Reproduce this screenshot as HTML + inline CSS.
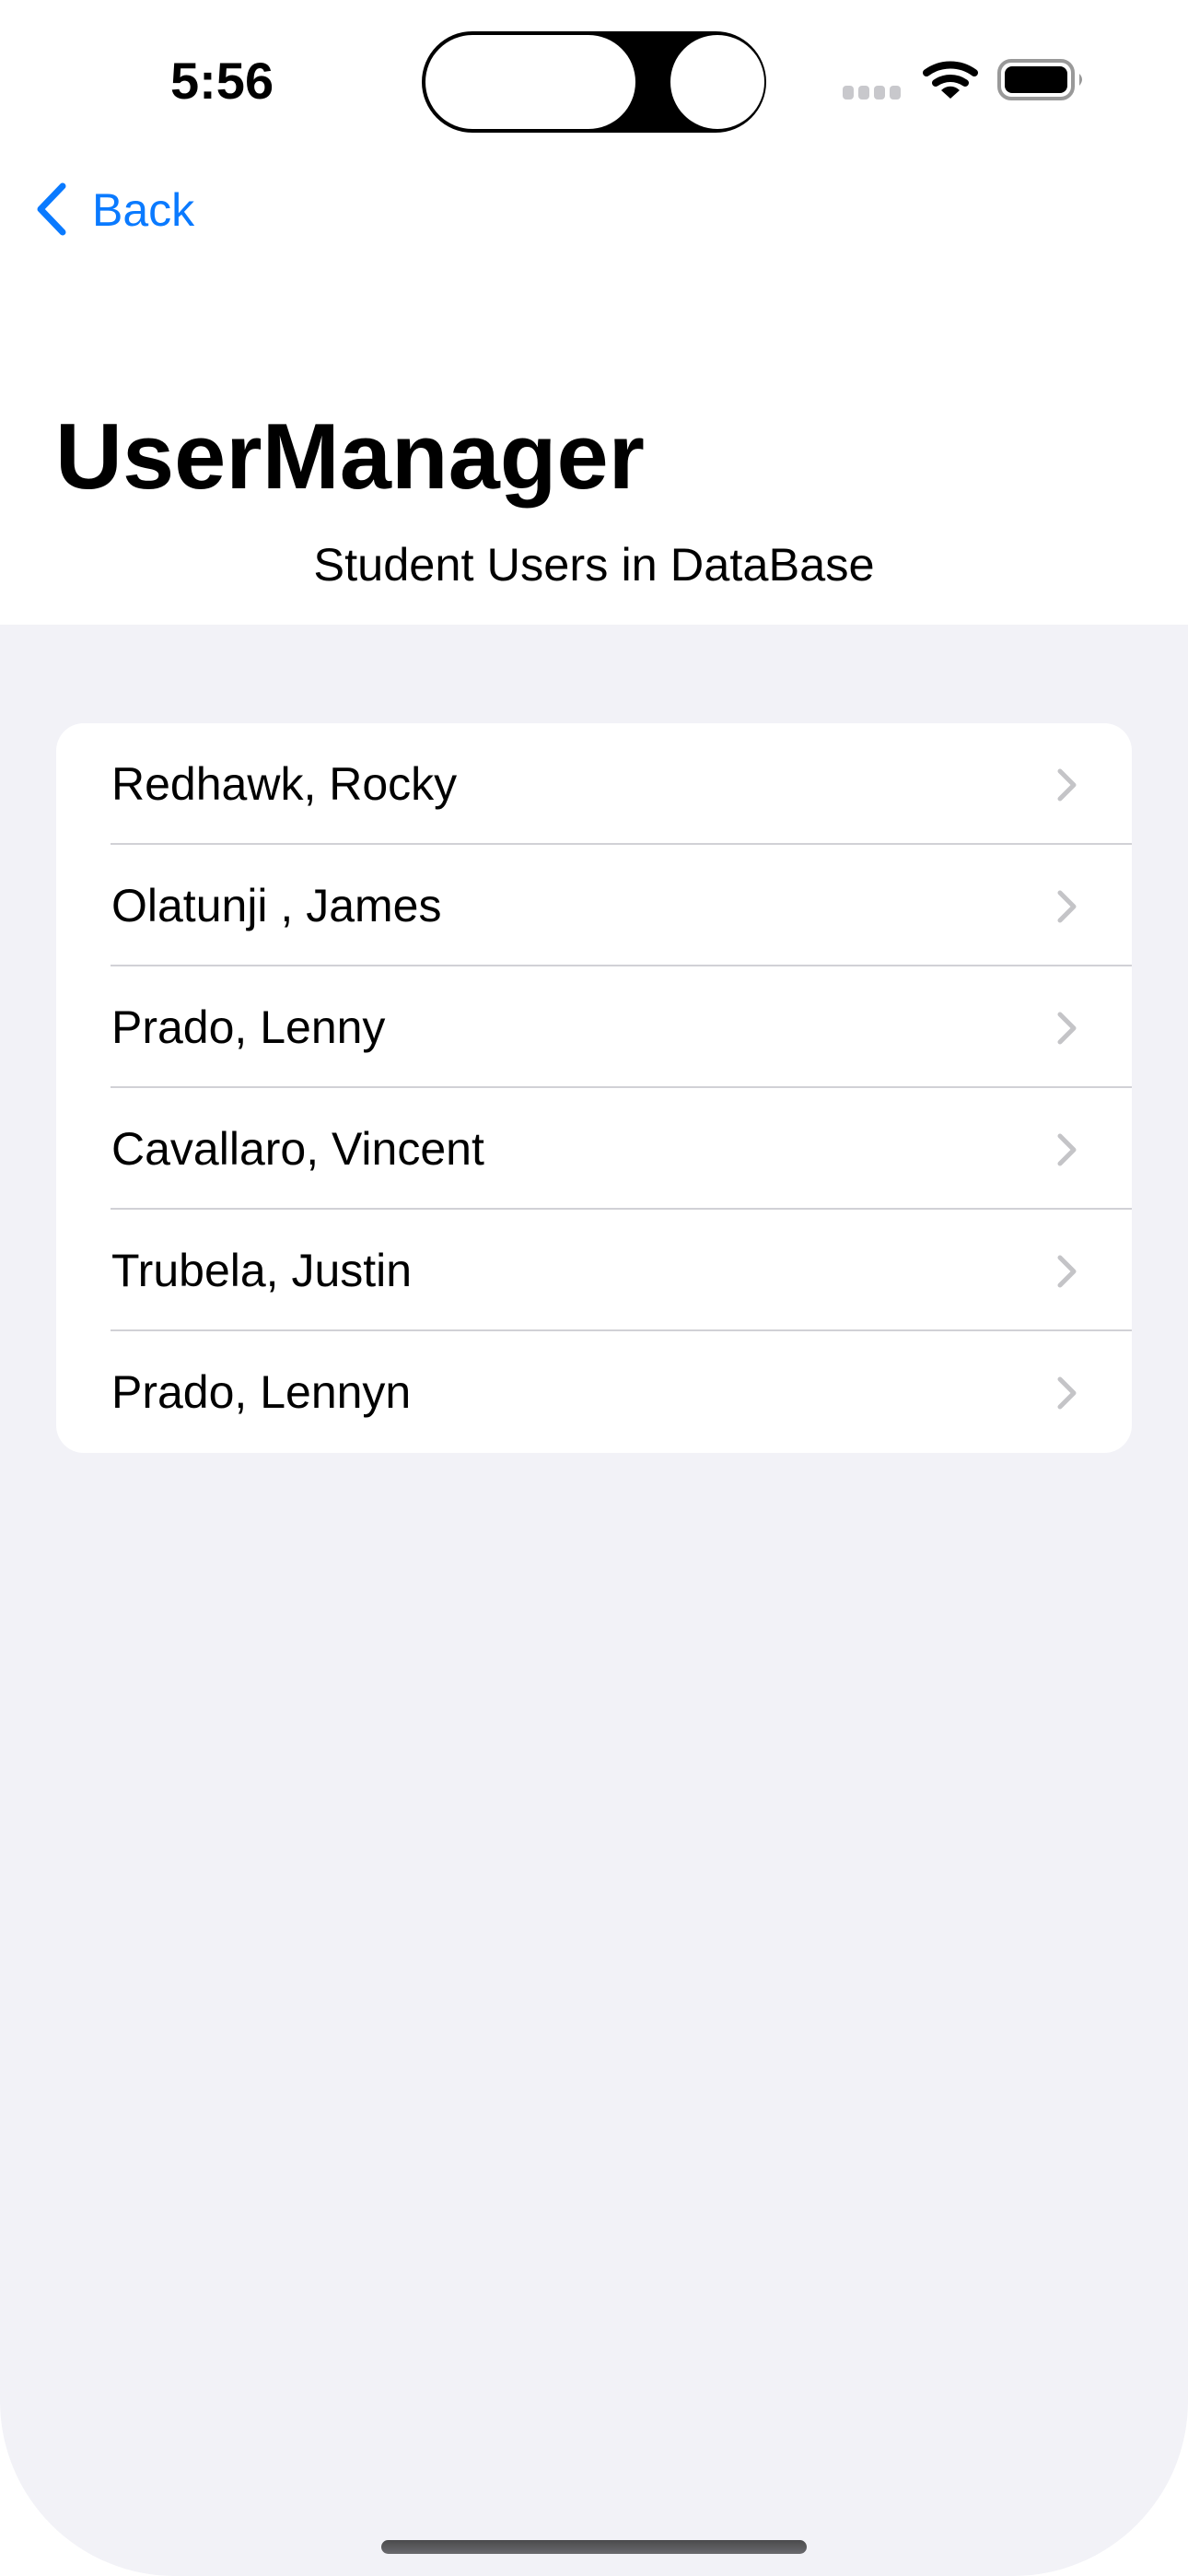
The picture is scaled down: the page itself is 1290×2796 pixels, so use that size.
<!DOCTYPE html>
<html><head><meta charset="utf-8"><style>
html,body{margin:0;padding:0}
body{width:1290px;height:2796px;position:relative;overflow:hidden;background:#fff;font-family:"Liberation Sans",sans-serif}
.gray{position:absolute;left:0;top:678px;width:1290px;height:2118px;background:#F2F2F7;border-bottom-left-radius:190px;border-bottom-right-radius:190px}
.abs{position:absolute}
.card{position:absolute;left:61px;top:785px;width:1168px;height:792px;background:#fff;border-radius:30px;overflow:hidden}
.row{position:absolute;left:0;width:1168px;height:132px}
.row span{position:absolute;left:60px;top:0;line-height:132px;font-size:50px;color:#000}
.sep{position:absolute;left:59px;right:0;bottom:0;height:2px;background:#D1D1D6}
.row svg{position:absolute;left:1086px;top:48px}
</style></head><body>
<div class="gray"></div>
<div class="abs" style="left:185px;top:56px;font-size:56px;font-weight:bold;line-height:64px">5:56</div>
<svg class="abs" style="left:456px;top:32px" width="378" height="114" viewBox="0 0 378 114">
<rect x="2" y="2" width="374" height="110" rx="55" fill="#000"/>
<rect x="6" y="6" width="228" height="102" rx="51" fill="#fff"/>
<ellipse cx="323" cy="57" rx="51" ry="51" fill="#fff"/>
</svg>
<svg class="abs" style="left:910px;top:60px" width="280" height="52" viewBox="0 0 280 52">
<rect x="5" y="33" width="12" height="15" rx="4" fill="#C8C8CC"/>
<rect x="22" y="33" width="12" height="15" rx="4" fill="#C8C8CC"/>
<rect x="39" y="33" width="12" height="15" rx="4" fill="#C8C8CC"/>
<rect x="56" y="33" width="12" height="15" rx="4" fill="#C8C8CC"/>
<path d="M96 19 A44 44 0 0 1 148 19" stroke="#000" stroke-width="8" fill="none" stroke-linecap="round"/>
<path d="M106 30 A28 28 0 0 1 138 30" stroke="#000" stroke-width="8" fill="none" stroke-linecap="round"/>
<path d="M112 38 L122 47 L132 38 A14 14 0 0 0 112 38Z" fill="#000"/>
<rect x="175" y="6" width="80" height="41" rx="13" fill="none" stroke="#999" stroke-width="4"/>
<rect x="181" y="12" width="68" height="29" rx="8" fill="#000"/>
<path d="M262 20 Q268 26 262 33Z" fill="#999"/>
</svg>
<svg class="abs" style="left:36px;top:198px" width="44" height="58" viewBox="0 0 44 58">
<path d="M32 4 L8 29 L32 54" stroke="#0A7AFF" stroke-width="7" fill="none" stroke-linecap="round" stroke-linejoin="round"/>
</svg>
<div class="abs" style="left:100px;top:197px;font-size:50px;line-height:62px;color:#0A7AFF">Back</div>
<div class="abs" style="left:60px;top:438px;font-size:101px;font-weight:bold;line-height:116px">UserManager</div>
<div class="abs" style="left:0;width:1290px;text-align:center;top:582px;font-size:50.5px;line-height:62px">Student Users in DataBase</div>
<div class="card">
<div class="row" style="top:0"><span>Redhawk, Rocky</span><div class="sep"></div><svg width="24" height="38" viewBox="0 0 24 38"><path d="M4 4 L19 19 L4 34" stroke="#C4C4C7" stroke-width="5" fill="none" stroke-linecap="round" stroke-linejoin="round"/></svg></div>
<div class="row" style="top:132px"><span>Olatunji , James</span><div class="sep"></div><svg width="24" height="38" viewBox="0 0 24 38"><path d="M4 4 L19 19 L4 34" stroke="#C4C4C7" stroke-width="5" fill="none" stroke-linecap="round" stroke-linejoin="round"/></svg></div>
<div class="row" style="top:264px"><span>Prado, Lenny</span><div class="sep"></div><svg width="24" height="38" viewBox="0 0 24 38"><path d="M4 4 L19 19 L4 34" stroke="#C4C4C7" stroke-width="5" fill="none" stroke-linecap="round" stroke-linejoin="round"/></svg></div>
<div class="row" style="top:396px"><span>Cavallaro, Vincent</span><div class="sep"></div><svg width="24" height="38" viewBox="0 0 24 38"><path d="M4 4 L19 19 L4 34" stroke="#C4C4C7" stroke-width="5" fill="none" stroke-linecap="round" stroke-linejoin="round"/></svg></div>
<div class="row" style="top:528px"><span>Trubela, Justin</span><div class="sep"></div><svg width="24" height="38" viewBox="0 0 24 38"><path d="M4 4 L19 19 L4 34" stroke="#C4C4C7" stroke-width="5" fill="none" stroke-linecap="round" stroke-linejoin="round"/></svg></div>
<div class="row" style="top:660px"><span>Prado, Lennyn</span><svg width="24" height="38" viewBox="0 0 24 38"><path d="M4 4 L19 19 L4 34" stroke="#C4C4C7" stroke-width="5" fill="none" stroke-linecap="round" stroke-linejoin="round"/></svg></div>
</div>
<div class="abs" style="left:414px;top:2757px;width:462px;height:15px;border-radius:8px;background:linear-gradient(#4a4a4c,#6a6a6e)"></div>
</body></html>
